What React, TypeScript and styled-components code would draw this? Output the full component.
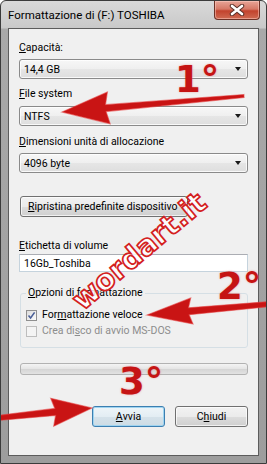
import React from 'react';
import styled, { createGlobalStyle } from 'styled-components';

const GlobalStyle = createGlobalStyle`
  html, body {
    margin: 0;
    padding: 0;
    background: #ffffff;
  }
  body {
    font-family: Roboto, 'Liberation Sans', sans-serif;
  }
`;

type Pt = [number, number];

// builds the outline of a red annotation arrow
const arrowPoints = (tail: Pt, tip: Pt, headLen: number, headHalf: number, tailHalf: number, neckHalf: number) => {
  const dx = tip[0] - tail[0];
  const dy = tip[1] - tail[1];
  const len = Math.hypot(dx, dy);
  const ux = dx / len;
  const uy = dy / len;
  const px = -uy;
  const py = ux;
  const bx = tip[0] - ux * headLen;
  const by = tip[1] - uy * headLen;
  const pts: Pt[] = [
    [tail[0] + px * tailHalf, tail[1] + py * tailHalf],
    [bx + px * neckHalf, by + py * neckHalf],
    [bx - ux * 3 + px * headHalf, by - uy * 3 + py * headHalf],
    tip,
    [bx - ux * 3 - px * headHalf, by - uy * 3 - py * headHalf],
    [bx - px * neckHalf, by - py * neckHalf],
    [tail[0] - px * tailHalf, tail[1] - py * tailHalf],
  ];
  return pts.map(p => `${p[0].toFixed(1)},${p[1].toFixed(1)}`).join(' ');
};

const arrows = [
  arrowPoints([244, 96], [62, 112], 44, 16, 1.5, 3.5),
  arrowPoints([270, 304], [147, 315], 42, 13, 2.5, 3.5),
  arrowPoints([-2, 418], [92, 408], 37, 14, 2.5, 3.5),
];

const steps = [
  { label: '1°', x: 175, y: 61 },
  { label: '2°', x: 217, y: 268 },
  { label: '3°', x: 119, y: 363 },
];

export default function App() {
  return (
    <>
      <GlobalStyle />
      <Window>
        <TitleBar>
          <Title>Formattazione di (F:) TOSHIBA</Title>
          <CloseButton>
            <svg width="16" height="12" viewBox="0 0 16 12">
              <path d="M3 2 L13 10 M13 2 L3 10" stroke="#5a3028" strokeWidth="4.5" strokeLinecap="round" />
              <path d="M3 2 L13 10 M13 2 L3 10" stroke="#ffffff" strokeWidth="2.6" strokeLinecap="round" />
            </svg>
          </CloseButton>
        </TitleBar>
        <Client>
          <Label>
            <u>C</u>apacità:
          </Label>
          <Combo $mt={4}>
            <span>14,4 GB</span>
            <DropArrow />
          </Combo>
          <Label $mt={8}>
            <u>F</u>ile system
          </Label>
          <Combo $mt={5}>
            <span>NTFS</span>
            <DropArrow />
          </Combo>
          <Label $mt={9}>
            <u>D</u>imensioni unità di allocazione
          </Label>
          <Combo $mt={4}>
            <span>4096 byte</span>
            <DropArrow />
          </Combo>
          <ResetButton>
            <u>R</u>ipristina predefinite dispositivo
          </ResetButton>
          <Label $mt={22}>
            <u>E</u>tichetta di volume
          </Label>
          <TextBox>16Gb_Toshiba</TextBox>
          <Group>
            <Legend>
              <u>O</u>pzioni di formattazione
            </Legend>
            <CheckRow>
              <CheckBox>
                <svg width="9" height="9" viewBox="0 0 9 9">
                  <path d="M1.5 4.5 L3.6 7 L7.6 1.4" stroke="#4a5f97" strokeWidth="1.6" fill="none" />
                </svg>
              </CheckBox>
              <span>
                For<u>m</u>attazione veloce
              </span>
            </CheckRow>
            <CheckRow $disabled>
              <CheckBox $disabled />
              <span>
                Crea di<u>s</u>co di avvio MS-DOS
              </span>
            </CheckRow>
          </Group>
          <Progress />
          <ButtonRow>
            <PushButton $primary>
              <u>A</u>vvia
            </PushButton>
            <PushButton>
              C<u>h</u>iudi
            </PushButton>
          </ButtonRow>
        </Client>
        <Annotations>
          <svg width="267" height="464" viewBox="0 0 267 464">
            {arrows.map((points, i) => (
              <polygon key={i} points={points} fill="#c91414" stroke="rgba(230,60,60,0.55)" strokeWidth="1.2" />
            ))}
          </svg>
          {steps.map(s => (
            <StepNumber key={s.label} style={{ left: s.x, top: s.y }}>
              {s.label}
            </StepNumber>
          ))}
          <Watermark>wordart.it</Watermark>
        </Annotations>
      </Window>
    </>
  );
}

const Window = styled.div`
  position: relative;
  width: 267px;
  height: 464px;
  box-sizing: border-box;
  display: flex;
  flex-direction: column;
  border: 1px solid #3b3b3b;
  border-radius: 6px 6px 0 0;
  background: linear-gradient(#d9d9d9, #c9c9c9 27px, #a9a9a9 28px, #9d9d9d);
  overflow: hidden;
`;

const TitleBar = styled.div`
  height: 27px;
  display: flex;
  align-items: flex-start;
  justify-content: space-between;
  padding-left: 7px;
`;

const Title = styled.div`
  margin-top: 5px;
  font-size: 11.5px;
  line-height: 18px;
  color: #000000;
  white-space: nowrap;
`;

const CloseButton = styled.div`
  width: 46px;
  height: 19px;
  margin-right: 6px;
  box-sizing: border-box;
  display: flex;
  align-items: center;
  justify-content: center;
  border: 1px solid #6d3227;
  border-top: none;
  border-radius: 0 0 4px 4px;
  background: linear-gradient(#e8a597, #d67866 45%, #c2432d 55%, #cf6a52);
  box-shadow: inset 0 0 0 1px rgba(255, 210, 200, 0.5);
`;

const Client = styled.div`
  flex: 1;
  margin: 0 7px 7px;
  box-sizing: border-box;
  display: flex;
  flex-direction: column;
  padding: 12px 10px 0;
  background: #f0f0f0;
  border: 1px solid #5c5c5c;
  font-size: 10.5px;
  color: #000000;
`;

const Label = styled.div<{ $mt?: number }>`
  margin-top: ${p => p.$mt ?? 0}px;
  height: 14px;
  line-height: 14px;
  white-space: nowrap;
`;

const Combo = styled.div<{ $mt?: number }>`
  margin-top: ${p => p.$mt ?? 0}px;
  height: 20px;
  box-sizing: border-box;
  display: flex;
  align-items: center;
  justify-content: space-between;
  padding: 0 6px 0 4px;
  border: 1px solid #8a8a8a;
  border-radius: 3px;
  background: linear-gradient(#f7f7f7, #efefef 50%, #e6e6e6 50%, #dedede);
  box-shadow: inset 0 0 0 1px rgba(255, 255, 255, 0.8);
`;

const DropArrow = styled.span`
  width: 0;
  height: 0;
  border-left: 3.5px solid transparent;
  border-right: 3.5px solid transparent;
  border-top: 4px solid #1a1a1a;
`;

const ResetButton = styled.div`
  margin-top: 23px;
  align-self: flex-start;
  margin-left: 1px;
  width: 168px;
  height: 21px;
  box-sizing: border-box;
  display: flex;
  align-items: center;
  padding-left: 7px;
  border: 1px solid #707070;
  border-radius: 3px;
  background: linear-gradient(#f2f2f2, #ebebeb 50%, #dddddd 50%, #cfcfcf);
  box-shadow: inset 0 0 0 1px rgba(255, 255, 255, 0.7);
  white-space: nowrap;
`;

const TextBox = styled.div`
  margin-top: 1px;
  height: 18px;
  box-sizing: border-box;
  display: flex;
  align-items: center;
  padding-left: 4px;
  background: #ffffff;
  border: 1px solid #c5d3dd;
  border-top-color: #abadb3;
`;

const Group = styled.fieldset`
  margin: 14px 0 0 1px;
  padding: 0 0 9px 5px;
  border: 1px solid #d5dfe5;
  border-radius: 3px;
  min-width: 0;
`;

const Legend = styled.legend`
  padding: 0 2px;
  margin: 0;
  height: 14px;
  line-height: 14px;
  font-size: 10.5px;
`;

const CheckRow = styled.div<{ $disabled?: boolean }>`
  margin-top: ${p => (p.$disabled ? 2 : 8)}px;
  height: 14px;
  display: flex;
  align-items: center;
  gap: 5px;
  line-height: 14px;
  color: ${p => (p.$disabled ? '#8d8d8d' : '#000000')};
`;

const CheckBox = styled.div<{ $disabled?: boolean }>`
  width: 11px;
  height: 11px;
  box-sizing: border-box;
  display: flex;
  align-items: center;
  justify-content: center;
  border: 1px solid ${p => (p.$disabled ? '#bdbdbd' : '#8f8f8f')};
  background: ${p => (p.$disabled ? '#f4f4f4' : 'linear-gradient(135deg, #dcdcdc, #fbfbfb)')};
`;

const Progress = styled.div`
  margin-top: 15px;
  margin-left: 1px;
  height: 12px;
  box-sizing: border-box;
  border: 1px solid #b2b2b2;
  border-radius: 3px;
  background: linear-gradient(#f4f4f4, #e6e6e6 45%, #d6d6d6 55%, #e2e2e2);
`;

const ButtonRow = styled.div`
  margin-top: 31px;
  display: flex;
  justify-content: flex-end;
  gap: 10px;
`;

const PushButton = styled.div<{ $primary?: boolean }>`
  width: 73px;
  height: 21px;
  box-sizing: border-box;
  display: flex;
  align-items: center;
  justify-content: center;
  border: 1px solid ${p => (p.$primary ? '#3c7fb1' : '#707070')};
  border-radius: 3px;
  background: ${p =>
    p.$primary
      ? 'linear-gradient(#eef5f9, #e3edf3 50%, #d5e2ea 50%, #cddce5)'
      : 'linear-gradient(#f2f2f2, #ebebeb 50%, #dddddd 50%, #cfcfcf)'};
  box-shadow: inset 0 0 0 1px ${p => (p.$primary ? '#9fd4f0' : 'rgba(255, 255, 255, 0.7)')};
`;

const Annotations = styled.div`
  position: absolute;
  inset: -1px;
  pointer-events: none;

  svg {
    position: absolute;
    left: 0;
    top: 0;
  }
`;

const StepNumber = styled.div`
  position: absolute;
  font-family: 'DejaVu Sans', sans-serif;
  font-weight: bold;
  font-size: 37px;
  line-height: 37px;
  color: #c51414;
  text-shadow: 0 0 2px rgba(235, 90, 90, 0.6);
  white-space: nowrap;
`;

const Watermark = styled.div`
  position: absolute;
  left: 139px;
  top: 251px;
  transform: translate(-50%, -50%) rotate(-40deg);
  font-family: 'DejaVu Sans', sans-serif;
  font-weight: bold;
  font-size: 29px;
  line-height: 32px;
  color: rgba(255, 255, 255, 0.85);
  -webkit-text-stroke: 1.7px #d42020;
  white-space: nowrap;
`;
